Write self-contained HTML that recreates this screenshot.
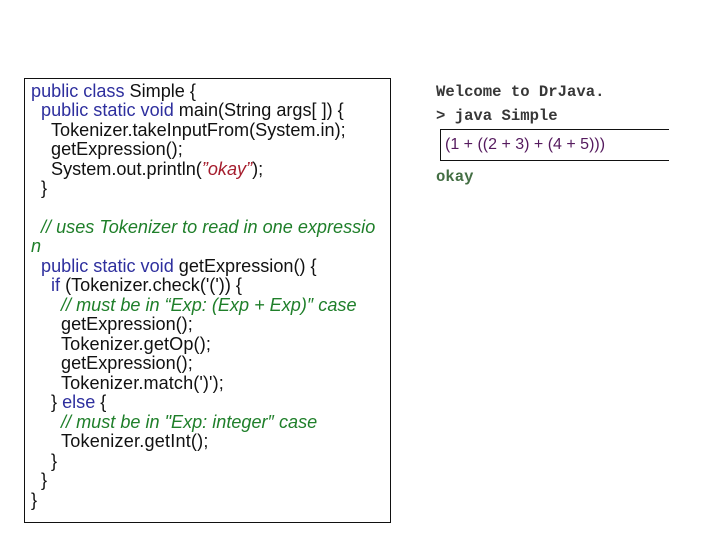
<!DOCTYPE html>
<html>
<head>
<meta charset="utf-8">
<style>
html,body{margin:0;padding:0;background:#fff;width:720px;height:540px;overflow:hidden}
body{position:relative;font-family:"Liberation Sans",sans-serif}
.box{position:absolute;left:24px;top:78px;width:365px;height:443px;border:1px solid #111}
.l{position:absolute;white-space:pre;font-size:18.1px;line-height:20px;color:#111;height:20px}
.k{color:#2e2f9e}
.c{color:#1f7f2a;font-style:italic}
.s{color:#a51d2d;font-style:italic}
.m{position:absolute;white-space:pre;font-family:"Liberation Mono",monospace;font-size:15.6px;line-height:18px;color:#222;font-weight:bold;opacity:.9}
.io{position:absolute;left:440px;top:129px;width:228px;height:30px;border:1px solid #111;border-right:0;box-sizing:content-box}
.expr{position:absolute;left:445px;top:136px;white-space:pre;font-size:16px;line-height:18px;color:#551a5e}
</style>
</head>
<body>
<div class="box"></div>
<div class="l" style="left:31px;top:81px"><span class="k">public class</span> Simple {</div>
<div class="l" style="left:41px;top:100px"><span class="k">public static void</span> main(String args[ ]) {</div>
<div class="l" style="left:51px;top:120px">Tokenizer.takeInputFrom(System.in);</div>
<div class="l" style="left:51px;top:139px">getExpression();</div>
<div class="l" style="left:51px;top:159px">System.out.println(<span class="s">”okay”</span>);</div>
<div class="l" style="left:41px;top:178px">}</div>
<div class="l c" style="left:41px;top:217px">// uses Tokenizer to read in one expressio</div>
<div class="l c" style="left:31px;top:236px">n</div>
<div class="l" style="left:41px;top:256px"><span class="k">public static void</span> getExpression() {</div>
<div class="l" style="left:51px;top:275px"><span class="k">if</span> (Tokenizer.check('(')) {</div>
<div class="l c" style="left:61px;top:295px">// must be in “Exp: (Exp + Exp)″ case</div>
<div class="l" style="left:61px;top:314px">getExpression();</div>
<div class="l" style="left:61px;top:334px;letter-spacing:.12px">Tokenizer.getOp();</div>
<div class="l" style="left:61px;top:353px">getExpression();</div>
<div class="l" style="left:61px;top:373px;letter-spacing:.1px">Tokenizer.match(')');</div>
<div class="l" style="left:51px;top:392px">} <span class="k">else</span> {</div>
<div class="l c" style="left:61px;top:412px">// must be in "Exp: integer″ case</div>
<div class="l" style="left:61px;top:431px;letter-spacing:.2px">Tokenizer.getInt();</div>
<div class="l" style="left:51px;top:451px">}</div>
<div class="l" style="left:41px;top:470px">}</div>
<div class="l" style="left:31px;top:490px">}</div>

<div class="m" style="left:436px;top:83px">Welcome to DrJava.</div>
<div class="m" style="left:436px;top:107px">&gt; java Simple</div>
<div class="io"></div>
<div class="expr">(1 + ((2 + 3) + (4 + 5)))</div>
<div class="m" style="left:436px;top:168px;color:#2f5f2f">okay</div>
</body>
</html>
